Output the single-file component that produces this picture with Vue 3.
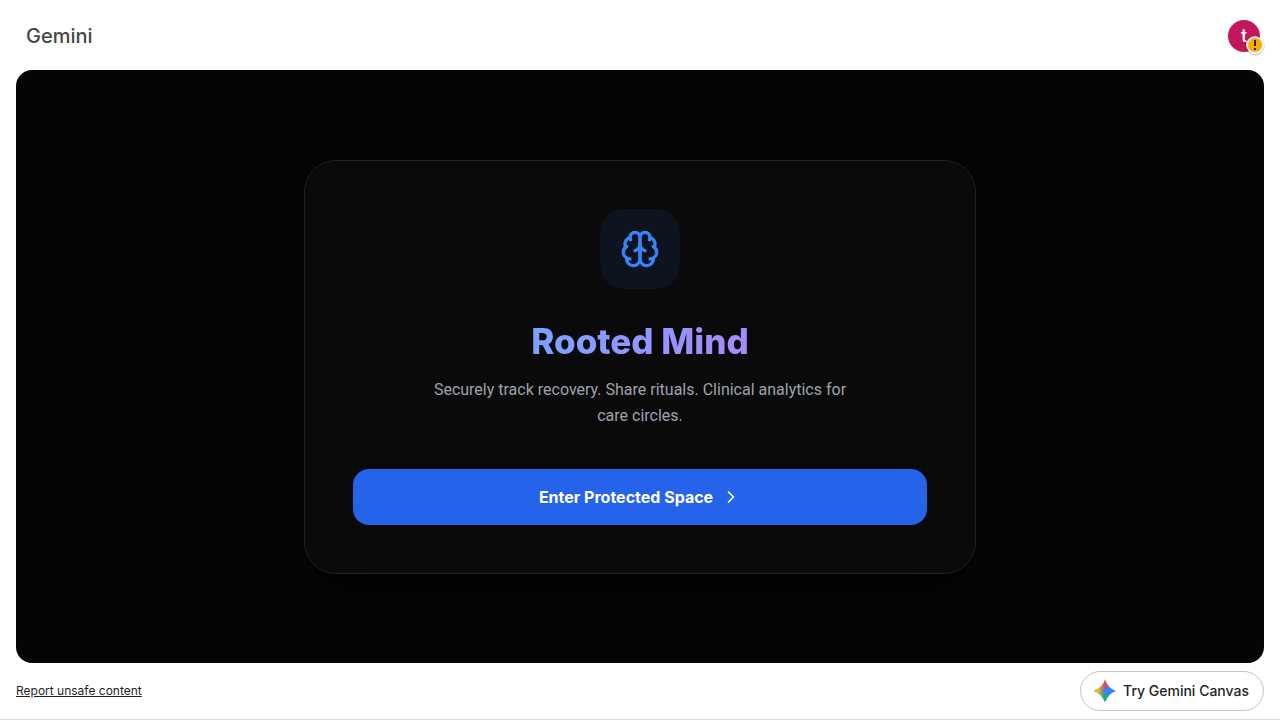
<script setup>
const brainPaths = [
  'M12 5a3 3 0 1 0-5.997.125 4 4 0 0 0-2.526 5.77 4 4 0 0 0 .556 6.588A4 4 0 1 0 12 18Z',
  'M12 5a3 3 0 1 1 5.997.125 4 4 0 0 1 2.526 5.77 4 4 0 0 1-.556 6.588A4 4 0 1 1 12 18Z',
  'M15 13a4.5 4.5 0 0 1-3-4 4.5 4.5 0 0 1-3 4',
  'M17.599 6.5a3 3 0 0 0 .399-1.375',
  'M6.003 5.125A3 3 0 0 0 6.401 6.5',
  'M3.477 10.896a4 4 0 0 1 .585-.396',
  'M19.938 10.5a4 4 0 0 1 .585.396',
  'M6 18a4 4 0 0 1-1.967-.516',
  'M19.967 17.484A4 4 0 0 1 18 18',
]
</script>

<template>
  <div class="page">
    <header class="topbar">
      <a class="brand" href="#">Gemini</a>
      <button class="avatar" type="button" aria-label="Account">
        t
        <svg class="badge" viewBox="0 0 18 18" aria-hidden="true">
          <circle cx="9" cy="9" r="9" fill="#f1f3f4" />
          <circle cx="9" cy="9" r="7" fill="#f9ab00" />
          <path d="M8 4h2v6H8zM8 12h2v2H8z" fill="#202124" />
        </svg>
      </button>
    </header>

    <main class="stage">
      <section class="card">
        <div class="tile">
          <svg class="brain" viewBox="0 0 24 24" aria-hidden="true">
            <path v-for="d in brainPaths" :key="d" :d="d" />
          </svg>
        </div>
        <h1>Rooted Mind</h1>
        <p>Securely track recovery. Share rituals. Clinical analytics for care circles.</p>
        <button class="enter" type="button">
          <span>Enter Protected Space</span>
          <svg viewBox="0 0 24 24" aria-hidden="true"><path d="m9 18 6-6-6-6" /></svg>
        </button>
      </section>
    </main>

    <footer class="bottombar">
      <a class="report" href="#">Report unsafe content</a>
      <button class="canvas" type="button">
        <svg viewBox="0 0 24 24" aria-hidden="true">
          <defs>
            <linearGradient id="spark-red" x1="11" y1="2" x2="14" y2="11" gradientUnits="userSpaceOnUse">
              <stop offset="0.4" stop-color="#f0434d" />
              <stop offset="1" stop-color="#f0434d" stop-opacity="0" />
            </linearGradient>
            <linearGradient id="spark-yellow" x1="1" y1="12" x2="11" y2="13" gradientUnits="userSpaceOnUse">
              <stop offset="0.4" stop-color="#fbbc04" />
              <stop offset="1" stop-color="#fbbc04" stop-opacity="0" />
            </linearGradient>
            <linearGradient id="spark-green" x1="9" y1="22" x2="13" y2="13" gradientUnits="userSpaceOnUse">
              <stop offset="0.4" stop-color="#16b657" />
              <stop offset="1" stop-color="#16b657" stop-opacity="0" />
            </linearGradient>
            <path id="spark" d="M12 1Q15 9 23 12Q15 15 12 23Q9 15 1 12Q9 9 12 1Z" />
          </defs>
          <g stroke-linejoin="round">
            <use href="#spark" fill="#3186ff" />
            <use href="#spark" fill="url(#spark-green)" />
            <use href="#spark" fill="url(#spark-red)" />
            <use href="#spark" fill="url(#spark-yellow)" />
          </g>
        </svg>
        <span>Try Gemini Canvas</span>
      </button>
    </footer>
  </div>
</template>

<style>
body {
  background: #fff;
}
</style>

<style scoped>
.page {
  box-sizing: border-box;
  min-height: 100vh;
  display: flex;
  flex-direction: column;
  border-bottom: 1px solid #dadce0;
  font-family: Inter, "Liberation Sans", sans-serif;
}
button {
  font: inherit;
  border: 0;
  padding: 0;
  cursor: pointer;
}
.topbar {
  display: flex;
  align-items: center;
  justify-content: space-between;
  height: 70px;
  padding: 2px 20px 0 26px;
  box-sizing: border-box;
}
.brand {
  color: #444746;
  font: 500 20px/28px Inter, sans-serif;
  text-decoration: none;
}
.avatar {
  position: relative;
  width: 32px;
  height: 32px;
  border-radius: 50%;
  background: #c2185b;
  color: #fff;
  font: 500 18px/32px Roboto, sans-serif;
}
.badge {
  position: absolute;
  right: -4px;
  bottom: -2px;
  width: 18px;
  height: 18px;
  border-radius: 50%;
  box-shadow: 0 1px 2px rgba(0, 0, 0, 0.3);
}
.stage {
  flex: 1;
  display: flex;
  align-items: center;
  justify-content: center;
  margin: 0 16px;
  padding: 24px;
  border-radius: 16px;
  background: #050505;
  overflow: hidden;
}
.card {
  box-sizing: border-box;
  width: 100%;
  max-width: 672px;
  padding: 48px;
  display: flex;
  flex-direction: column;
  align-items: center;
  border: 1px solid #222;
  border-radius: 32px;
  background: #0a0a0a;
  box-shadow: 0 24px 48px -12px rgba(0, 0, 0, 0.6);
}
.tile {
  display: grid;
  place-items: center;
  width: 80px;
  height: 80px;
  border-radius: 24px;
  background: #0d131f;
}
.brain {
  width: 40px;
  height: 40px;
}
.brain path,
.enter path {
  fill: none;
  stroke: #3b82f6;
  stroke-width: 2;
  stroke-linecap: round;
  stroke-linejoin: round;
}
h1 {
  margin: 32px 0 16px;
  font-size: 35px;
  font-weight: 800;
  line-height: 40px;
  color: transparent;
  background: linear-gradient(to right, #7aa2ff, #a78bfa);
  background-clip: text;
}
p {
  max-width: 432px;
  margin: 0 0 40px;
  color: #9ca3af;
  font-family: Roboto, sans-serif;
  font-size: 16px;
  line-height: 26px;
  text-align: center;
}
.enter {
  display: flex;
  align-items: center;
  justify-content: center;
  gap: 8px;
  width: 100%;
  height: 56px;
  border-radius: 16px;
  background: #2563eb;
  color: #fff;
  font-size: 16px;
  font-weight: 700;
}
.enter svg {
  width: 20px;
  height: 20px;
}
.enter path {
  stroke: #fff;
}
.bottombar {
  display: flex;
  align-items: center;
  justify-content: space-between;
  padding: 8px 16px;
}
.report {
  color: #1f1f1f;
  font: 400 12px/16px Inter, sans-serif;
  text-decoration: underline;
}
.canvas {
  display: flex;
  align-items: center;
  gap: 6px;
  height: 40px;
  padding: 0 14px 0 12px;
  border: 1px solid #c4c7c5;
  border-radius: 20px;
  background: #fff;
  color: #1f1f1f;
  font: 500 14px/20px Inter, sans-serif;
}
.canvas svg {
  width: 24px;
  height: 24px;
}
</style>
